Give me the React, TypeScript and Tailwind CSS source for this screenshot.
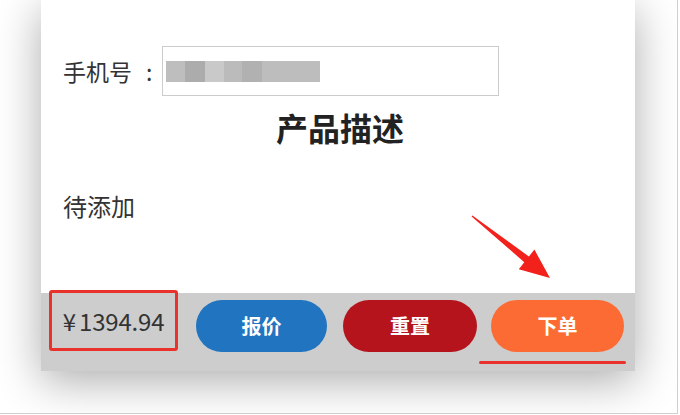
import React from 'react';

const mosaic = ['#bebebe', '#acacac', '#c9c9c9', '#bbbbbb', '#b1b1b1', '#bdbdbd'];
const mosaicW = [19, 20, 19, 18, 20, 58];

export default function App() {
  return (
    <div
      className="relative w-[678px] h-[414px] bg-white border-r border-b border-[#cfcfcf] overflow-hidden"
      style={{ fontFamily: '"Noto Sans CJK SC", "Noto Sans", sans-serif' }}
    >
      <div className="pl-[41px]">
        <div className="w-[594px] h-[371px] bg-white flex flex-col shadow-[0_10px_42px_rgba(0,0,0,0.33)]">
          {/* form content */}
          <div className="h-[293px] pl-[22px] pt-[46px]">
            <div className="flex items-center h-[50px]">
              <span className="text-[23px] text-[#333] leading-none">手机号</span>
              <span className="text-[23px] text-[#333] leading-none ml-[14px] w-[16px]">:</span>
              <div className="w-[337px] h-[50px] border border-[#cccccc] bg-white flex items-center pl-[3px]">
                <div className="flex h-[21px]">
                  {mosaic.map((c, i) => (
                    <div key={i} className="h-full" style={{ width: mosaicW[i], background: c }} />
                  ))}
                </div>
              </div>
            </div>
            <h2 className="text-[32px] font-bold text-[#222] text-center pr-[18px] mt-[15px] leading-none">
              产品描述
            </h2>
            <p className="text-[24px] text-[#333] mt-[51px] leading-none">待添加</p>
          </div>

          {/* bottom bar */}
          <div className="relative flex-1 bg-[#cdcdcd] flex items-start">
            <div className="ml-[8px] -mt-[3px] w-[129px] h-[61px] border-[3px] border-[#e8322b] rounded-[3px] flex items-center justify-center">
              <span className="text-[24px] text-[#333] leading-none">¥</span>
              <span className="text-[24px] text-[#333] leading-none ml-[3px] tracking-[-0.2px]">1394.94</span>
            </div>
            <button className="ml-[18px] mt-[7px] w-[131px] h-[52px] rounded-full bg-[#2174bf] text-white text-[20px] font-bold">
              报价
            </button>
            <button className="ml-[16px] mt-[7px] w-[134px] h-[52px] rounded-full bg-[#b5141c] text-white text-[20px] font-bold">
              重置
            </button>
            <button className="ml-[14px] mt-[7px] w-[133px] h-[52px] rounded-full bg-[#fd6b35] text-white text-[20px] font-bold">
              下单
            </button>
            <div className="absolute left-[438px] top-[68px] w-[147px] h-[3px] bg-[#e8322b] rounded-full" />
          </div>
        </div>
      </div>

      {/* annotation arrow */}
      <svg className="absolute inset-0 pointer-events-none" width="680" height="415" viewBox="0 0 680 415">
        <polygon
          points="471.6,216.4 524.3,262.2 518.8,269.2 550,278 534.4,249.6 528.9,256.5 472.4,215.6"
          fill="#f2211b"
        />
      </svg>
    </div>
  );
}
